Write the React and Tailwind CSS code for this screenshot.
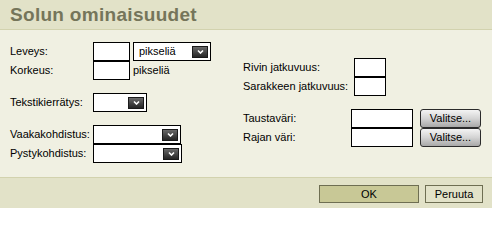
import React from "react";

const font = { fontFamily: '"Liberation Sans", Arial, sans-serif' };

function DropIcon() {
  return (
    <div className="w-[16px] h-[12px] border border-[#1a1a1a] bg-gradient-to-b from-[#6a6a6a] to-[#262626] flex items-center justify-center">
      <svg width="7" height="5" viewBox="0 0 7 5">
        <path d="M1 1.5L3.5 4L6 1.5" fill="none" stroke="#fff" strokeWidth="1.6" />
      </svg>
    </div>
  );
}

function Select({ w, children }) {
  return (
    <div className={`${w} h-[19px] border border-black bg-white flex items-center justify-between pl-[5px] pr-[2px]`}>
      <span className="leading-none">{children}</span>
      <DropIcon />
    </div>
  );
}

function Box({ w }) {
  return <div className={`${w} h-[19px] border border-black bg-white`} />;
}

function ChooseBtn() {
  return (
    <div className="w-[61px] h-[19px] rounded-[3px] border border-[#2b2b2b] bg-gradient-to-b from-[#f4f4f4] via-[#d4d4d4] to-[#a8a8a8] flex items-center justify-center leading-none">
      Valitse...
    </div>
  );
}

export default function App() {
  return (
    <div className="w-[492px] h-[208px] bg-[#e2e2c8] text-[11px] text-black" style={font}>
      <div className="h-[30px] bg-[#e2e2c8] border-b border-[#d2d2ae] flex items-center pl-[10px]">
        <span className="text-[19px] font-bold text-[#75755a] leading-none tracking-[0.3px]">Solun ominaisuudet</span>
      </div>
      <div className="h-[147px] bg-[#f0f0e2] flex pl-[10px]">
        <div className="w-[233px] flex flex-col pt-[12px]">
          <div className="flex">
            <div className="w-[83px] flex flex-col">
              <div className="h-[19px] flex items-center">Leveys:</div>
              <div className="h-[19px] flex items-center">Korkeus:</div>
            </div>
            <div className="flex flex-col">
              <Box w="w-[37px]" />
              <Box w="w-[37px]" />
            </div>
            <div className="flex flex-col ml-[3px]">
              <Select w="w-[78px]">pikseliä</Select>
              <div className="h-[19px] flex items-center">pikseliä</div>
            </div>
          </div>
          <div className="flex mt-[13px]">
            <div className="w-[83px] h-[19px] flex items-center">Tekstikierrätys:</div>
            <Select w="w-[54px]" />
          </div>
          <div className="flex mt-[13px]">
            <div className="w-[83px] flex flex-col">
              <div className="h-[19px] flex items-center">Vaakakohdistus:</div>
              <div className="h-[19px] flex items-center">Pystykohdistus:</div>
            </div>
            <div className="flex flex-col">
              <Select w="w-[88px]" />
              <Select w="w-[89px]" />
            </div>
          </div>
        </div>
        <div className="flex flex-col pt-[28px]">
          <div className="flex">
            <div className="w-[111px] flex flex-col">
              <div className="h-[19px] flex items-center">Rivin jatkuvuus:</div>
              <div className="h-[19px] flex items-center">Sarakkeen jatkuvuus:</div>
            </div>
            <div className="flex flex-col">
              <Box w="w-[32px]" />
              <Box w="w-[32px]" />
            </div>
          </div>
          <div className="flex mt-[13px]">
            <div className="w-[108px] flex flex-col">
              <div className="h-[19px] flex items-center">Taustaväri:</div>
              <div className="h-[19px] flex items-center">Rajan väri:</div>
            </div>
            <div className="flex flex-col">
              <Box w="w-[62px]" />
              <Box w="w-[62px]" />
            </div>
            <div className="flex flex-col ml-[7px]">
              <ChooseBtn />
              <ChooseBtn />
            </div>
          </div>
        </div>
      </div>
      <div className="h-[31px] bg-[#e2e2c8] border-t border-[#d2d2ae] flex items-start pt-[7px] justify-end pr-[9px] gap-[6px]">
        <div className="w-[100px] h-[18px] bg-[#c8c896] border border-[#6e6e52] flex items-center justify-center leading-none">OK</div>
        <div className="w-[58px] h-[18px] bg-[#e2e2c8] border border-[#6e6e52] flex items-center justify-center leading-none">Peruuta</div>
      </div>
    </div>
  );
}
